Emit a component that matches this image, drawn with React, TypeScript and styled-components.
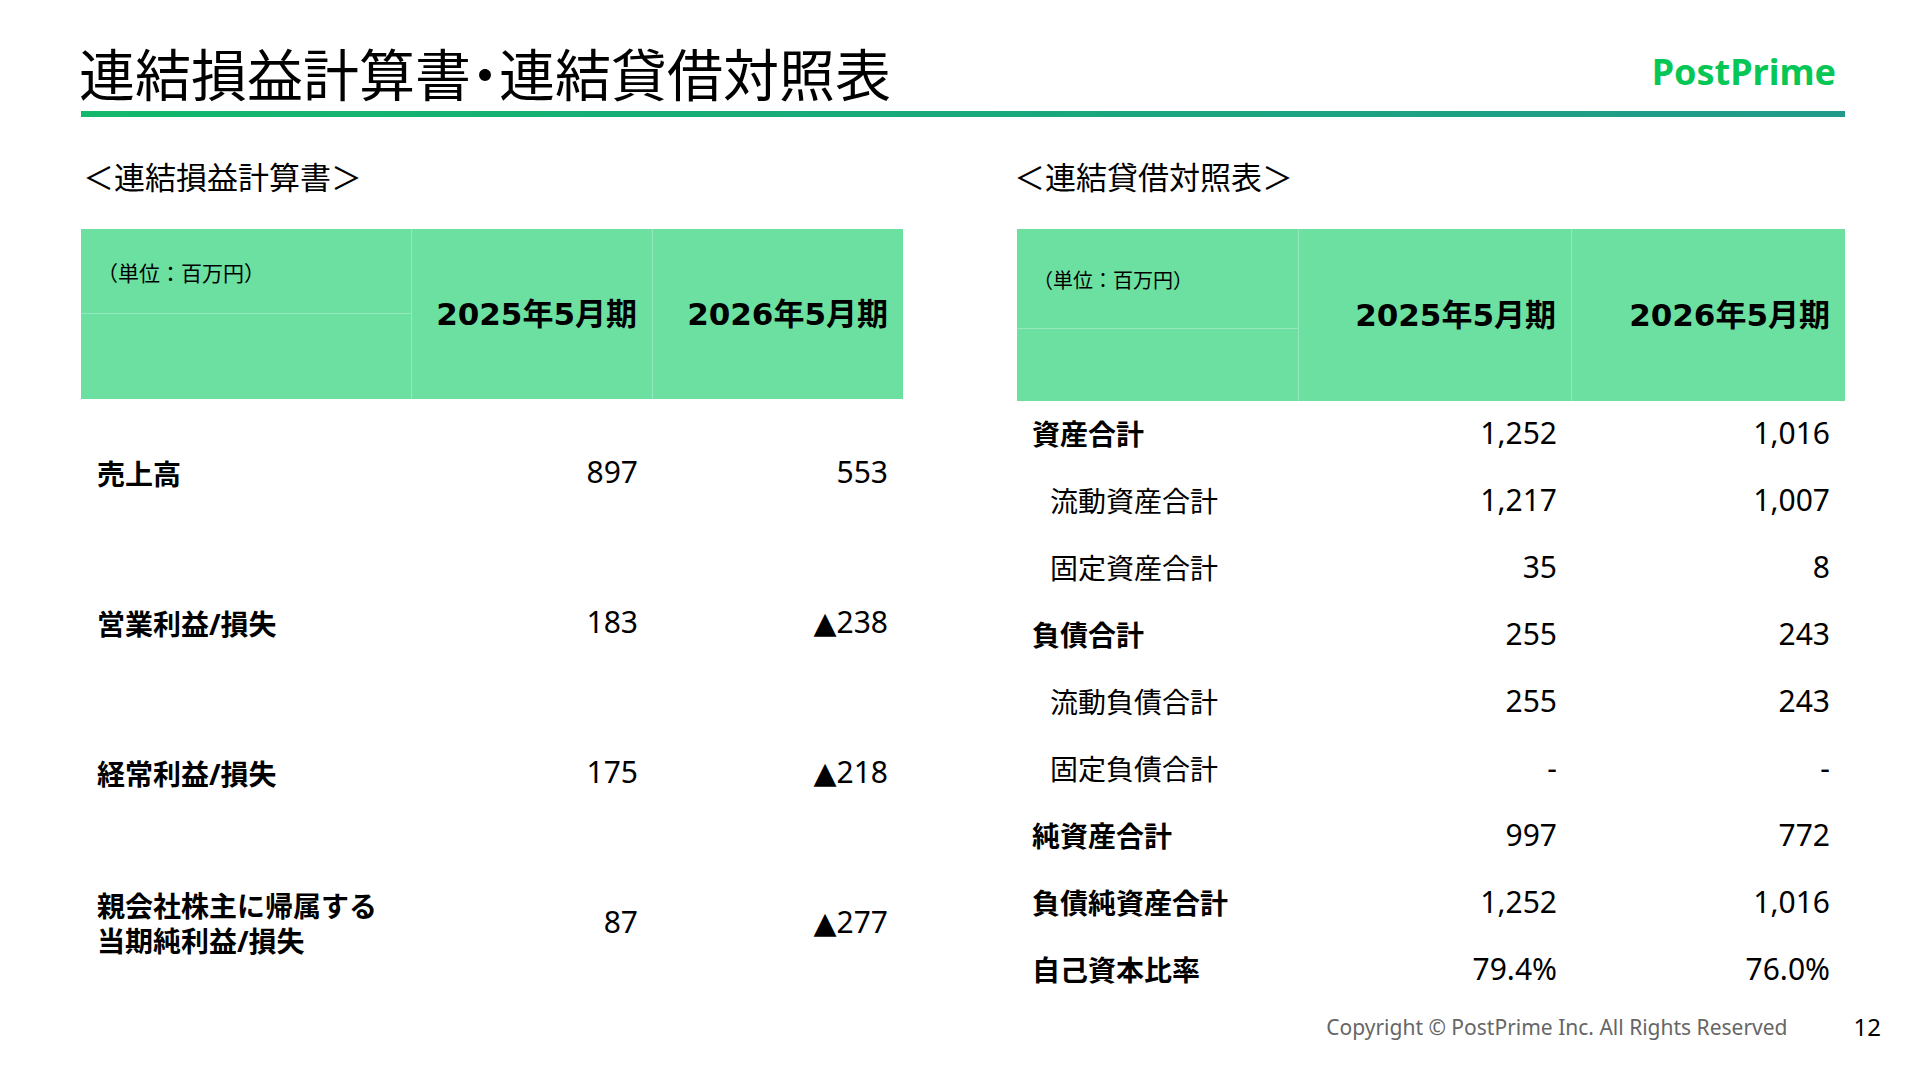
import React from "react";
import styled, { createGlobalStyle } from "styled-components";

const GlobalStyle = createGlobalStyle`
  html, body {
    margin: 0;
    padding: 0;
    background: #ffffff;
  }
  body {
    font-family: "Noto Sans", "Noto Sans CJK JP", sans-serif;
    color: #000000;
  }
`;

const HEADER_GREEN = "#6be0a1";
const DIVIDER = "rgba(255, 255, 255, 0.28)";

const Slide = styled.div`
  width: 1920px;
  height: 1080px;
  display: flex;
  flex-direction: column;
  background: #ffffff;
  overflow: hidden;
`;

const TopBar = styled.header`
  display: flex;
  align-items: center;
  justify-content: space-between;
  height: 56px;
  margin-top: 44px;
  padding: 0 84px 0 79px;
`;

const Title = styled.h1`
  margin: 0;
  font-family: "Noto Sans CJK JP", sans-serif;
  font-size: 56px;
  font-weight: 400;
  line-height: 1;
  letter-spacing: 0;
  white-space: nowrap;
`;

const Dot = styled.span`
  font-feature-settings: "halt" 1;
`;

const Logo = styled.div`
  font-family: "Noto Sans", sans-serif;
  font-size: 36px;
  font-weight: 700;
  line-height: 1;
  color: #06c755;
`;

const Rule = styled.div`
  height: 6px;
  margin: 11px 75px 0 81px;
  background: linear-gradient(90deg, #11b86c 0%, #1f9a8b 100%);
`;

const Columns = styled.main`
  display: grid;
  grid-template-columns: 822px 828px;
  column-gap: 114px;
  padding: 0 75px 0 81px;
  margin-top: 43px;
`;

const Section = styled.section`
  display: flex;
  flex-direction: column;
`;

const SectionTitle = styled.h2<{ $shift: number }>`
  margin: 0 0 38px ${(p) => p.$shift}px;
  font-family: "Noto Sans CJK JP", sans-serif;
  font-size: 31px;
  font-weight: 400;
  line-height: 1;
  white-space: nowrap;
`;

const Table = styled.div`
  display: flex;
  flex-direction: column;
`;

const HeaderRow = styled.div<{ $cols: string; $height: number }>`
  display: grid;
  grid-template-columns: ${(p) => p.$cols};
  height: ${(p) => p.$height}px;
  background: ${HEADER_GREEN};
`;

const StubCol = styled.div<{ $split: number }>`
  display: grid;
  grid-template-rows: ${(p) => p.$split}px 1fr;
  border-right: 1px solid ${DIVIDER};
`;

const UnitCell = styled.div<{ $size: number }>`
  display: flex;
  align-items: center;
  padding-left: 16px;
  padding-top: 2px;
  border-bottom: 1px solid ${DIVIDER};
  font-family: "Noto Sans CJK JP", sans-serif;
  font-size: ${(p) => p.$size}px;
  line-height: 1;
  white-space: nowrap;
`;

const YearCell = styled.div<{ $divider?: boolean }>`
  display: flex;
  align-items: center;
  justify-content: flex-end;
  padding-right: 15px;
  border-right: ${(p) => (p.$divider ? `1px solid ${DIVIDER}` : "none")};
  font-family: "DejaVu Sans", "Noto Sans CJK JP", sans-serif;
  font-size: 31px;
  font-weight: 700;
  line-height: 1;
  white-space: nowrap;
`;

const BodyRow = styled.div<{ $cols: string; $height: number }>`
  display: grid;
  grid-template-columns: ${(p) => p.$cols};
  height: ${(p) => p.$height}px;
  align-items: center;
`;

const Label = styled.div<{ $indent: number; $bold: boolean }>`
  padding-left: ${(p) => p.$indent}px;
  font-family: "Noto Sans", "Noto Sans CJK JP", sans-serif;
  font-size: 28px;
  font-weight: ${(p) => (p.$bold ? 700 : 400)};
  line-height: 1.25;
  white-space: nowrap;
`;

const Line = styled.span`
  display: block;
`;

const Value = styled.div`
  padding-right: 15px;
  text-align: right;
  font-family: "Noto Sans", "DejaVu Sans", "Noto Sans CJK JP", sans-serif;
  font-size: 30px;
  font-weight: 400;
  line-height: 1;
  white-space: nowrap;
  transform: translateY(-2px);
`;

const Footer = styled.footer`
  display: flex;
  align-items: center;
  justify-content: flex-end;
  gap: 66px;
  margin-top: auto;
  padding: 0 39px 38px 0;
`;

const Copyright = styled.div`
  font-family: "Noto Sans", sans-serif;
  font-size: 21px;
  color: #666666;
  line-height: 30px;
  white-space: nowrap;
`;

const PageNo = styled.div`
  font-family: "Noto Sans", sans-serif;
  font-size: 24px;
  color: #000000;
  line-height: 30px;
`;

type Row = { label: string[]; a: string; b: string; bold: boolean; indent: number };

const plRows: Row[] = [
  { label: ["売上高"], a: "897", b: "553", bold: true, indent: 16 },
  { label: ["営業利益/損失"], a: "183", b: "▲238", bold: true, indent: 16 },
  { label: ["経常利益/損失"], a: "175", b: "▲218", bold: true, indent: 16 },
  { label: ["親会社株主に帰属する", "当期純利益/損失"], a: "87", b: "▲277", bold: true, indent: 16 },
];

const bsRows: Row[] = [
  { label: ["資産合計"], a: "1,252", b: "1,016", bold: true, indent: 15 },
  { label: ["流動資産合計"], a: "1,217", b: "1,007", bold: false, indent: 33 },
  { label: ["固定資産合計"], a: "35", b: "8", bold: false, indent: 33 },
  { label: ["負債合計"], a: "255", b: "243", bold: true, indent: 15 },
  { label: ["流動負債合計"], a: "255", b: "243", bold: false, indent: 33 },
  { label: ["固定負債合計"], a: "-", b: "-", bold: false, indent: 33 },
  { label: ["純資産合計"], a: "997", b: "772", bold: true, indent: 15 },
  { label: ["負債純資産合計"], a: "1,252", b: "1,016", bold: true, indent: 15 },
  { label: ["自己資本比率"], a: "79.4%", b: "76.0%", bold: true, indent: 15 },
];

type TableProps = {
  cols: string;
  headerHeight: number;
  split: number;
  unitSize: number;
  rowHeight: number;
  rows: Row[];
};

function FinTable({ cols, headerHeight, split, unitSize, rowHeight, rows }: TableProps) {
  return (
    <Table>
      <HeaderRow $cols={cols} $height={headerHeight}>
        <StubCol $split={split}>
          <UnitCell $size={unitSize}>（単位：百万円）</UnitCell>
          <div />
        </StubCol>
        <YearCell $divider>2025年5月期</YearCell>
        <YearCell>2026年5月期</YearCell>
      </HeaderRow>
      {rows.map((r, i) => (
        <BodyRow key={i} $cols={cols} $height={rowHeight}>
          <Label $indent={r.indent} $bold={r.bold}>
            {r.label.map((l, j) => (
              <Line key={j}>{l}</Line>
            ))}
          </Label>
          <Value>{r.a}</Value>
          <Value>{r.b}</Value>
        </BodyRow>
      ))}
    </Table>
  );
}

export default function App() {
  return (
    <>
      <GlobalStyle />
      <Slide>
        <TopBar>
          <Title>
            連結損益計算書<Dot>・</Dot>連結貸借対照表
          </Title>
          <Logo>PostPrime</Logo>
        </TopBar>
        <Rule />
        <Columns>
          <Section>
            <SectionTitle $shift={2}>＜連結損益計算書＞</SectionTitle>
            <FinTable
              cols="331px 241px 250px"
              headerHeight={170}
              split={85}
              unitSize={21}
              rowHeight={150}
              rows={plRows}
            />
          </Section>
          <Section>
            <SectionTitle $shift={-3}>＜連結貸借対照表＞</SectionTitle>
            <FinTable
              cols="282px 273px 273px"
              headerHeight={172}
              split={100}
              unitSize={20}
              rowHeight={67}
              rows={bsRows}
            />
          </Section>
        </Columns>
        <Footer>
          <Copyright>Copyright © PostPrime Inc. All Rights Reserved</Copyright>
          <PageNo>12</PageNo>
        </Footer>
      </Slide>
    </>
  );
}
